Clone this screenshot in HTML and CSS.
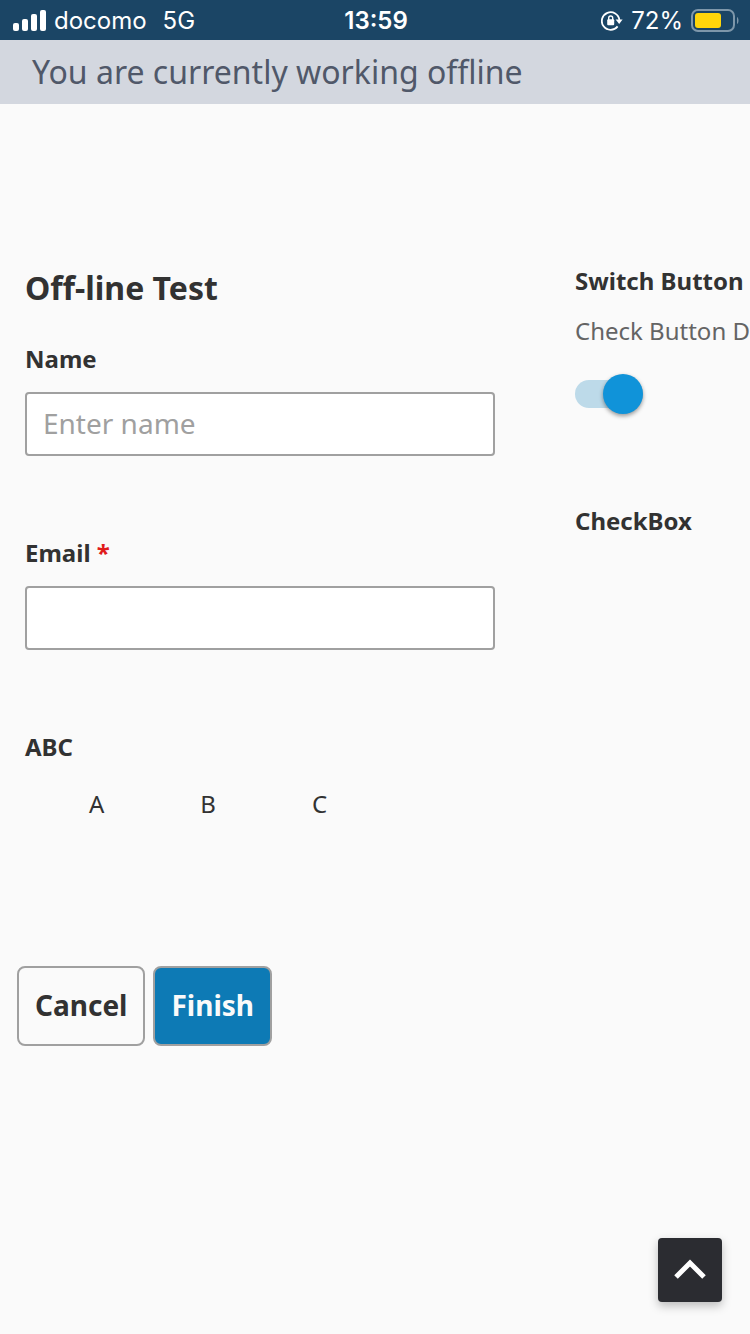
FILE: index.html
```html
<!DOCTYPE html>
<html lang="en">
<head>
    <meta charset="UTF-8">
    <meta name="viewport" content="width=device-width, initial-scale=1">
    <title>Off-line Test</title>
    <link rel="stylesheet" href="styles.css">
</head>
<body>
    <header class="status-bar">
        <div class="status-left">
            <svg width="33" height="22" viewBox="0 0 33 22" fill="#fff" aria-hidden="true">
                <rect x="0" y="13" width="6" height="8" rx="2"/>
                <rect x="9" y="9" width="6" height="12" rx="2"/>
                <rect x="18" y="4" width="6" height="17" rx="2"/>
                <rect x="27" y="0" width="6" height="21" rx="2"/>
            </svg>
            <span class="carrier">docomo</span>
            <span>5G</span>
        </div>
        <div class="status-time">13:59</div>
        <div class="status-right">
            <svg width="22" height="20" viewBox="0 0 22 20" fill="none" aria-hidden="true">
                <path d="M16.6 15.4A8.8 8.8 0 1 1 18.4 9" stroke="#fff" stroke-width="1.8"/>
                <path d="M14.6 8.5H21.6L18.2 13Z" fill="#fff"/>
                <rect x="6.2" y="8.3" width="7" height="6" rx="1" fill="#fff"/>
                <path d="M7.7 9V7a2 2 0 0 1 4 0v2" stroke="#fff" stroke-width="1.4"/>
            </svg>
            <span>72%</span>
            <svg width="48" height="24" viewBox="0 0 48 24" fill="none" aria-hidden="true">
                <rect x="1" y="1" width="42" height="21" rx="6" stroke="#7e97aa" stroke-width="2"/>
                <rect x="4" y="4" width="26" height="15" rx="3" fill="#ffd60a"/>
                <path d="M46 8c2 1 2 6 0 7z" fill="#7e97aa"/>
            </svg>
        </div>
    </header>
    <div class="offline-banner">You are currently working offline</div>

    <main>
        <form>
            <div class="columns">
                <div class="main-column">
                    <h1>Off-line Test</h1>
                    <div class="field">
                        <label class="field-label" for="name">Name</label>
                        <input class="text-input" type="text" id="name" placeholder="Enter name">
                    </div>
                    <div class="field">
                        <label class="field-label" for="email">Email <span class="required">*</span></label>
                        <input class="text-input" type="email" id="email" required>
                    </div>
                    <fieldset class="choices">
                        <legend class="field-label">ABC</legend>
                        <div class="choice-row">
                            <label class="choice"><input type="radio" name="abc" value="A">A</label>
                            <label class="choice"><input type="radio" name="abc" value="B">B</label>
                            <label class="choice"><input type="radio" name="abc" value="C">C</label>
                        </div>
                    </fieldset>
                </div>
                <div class="side-column">
                    <label class="field-label" for="switch">Switch Button</label>
                    <p class="description">Check Button D</p>
                    <input class="switch" type="checkbox" id="switch" checked>
                    <h2 class="field-label">CheckBox</h2>
                </div>
            </div>
            <div class="button-group">
                <button type="button" class="btn">Cancel</button>
                <button type="submit" class="btn btn-primary">Finish</button>
            </div>
        </form>
    </main>

    <button type="button" class="to-top" aria-label="Back to top">
        <svg width="32" height="22" viewBox="0 0 32 22" fill="none" aria-hidden="true">
            <path d="M2 18L16 4L30 18" stroke="#fff" stroke-width="5"/>
        </svg>
    </button>
</body>
</html>
```
FILE: styles.css
```css
* {
    box-sizing: border-box;
}
body {
    margin: 0;
    min-height: 100vh;
    overflow-x: hidden;
    background-color: #fafafa;
    color: #323232;
    font-family: "Noto Sans", sans-serif;
    font-size: 24px;
    line-height: 32px;
}
.status-bar {
    display: grid;
    grid-template-columns: 1fr auto 1fr;
    align-items: center;
    height: 40px;
    padding: 1px 11px 0 13px;
    background-color: #1b4565;
    color: #fff;
    font-family: Inter, sans-serif;
}
.status-left,
.status-right {
    display: flex;
    align-items: center;
    gap: 8px;
}
.status-right {
    justify-content: flex-end;
}
.carrier {
    margin-right: 8px;
}
.status-time {
    font-weight: 600;
}
.offline-banner {
    padding: 12px 32px;
    background-color: #d3d7df;
    color: #505869;
    font-size: 32px;
    line-height: 40px;
}
main {
    padding: 161px 0 80px;
}
.columns {
    display: grid;
    grid-template-columns: minmax(0, 1fr) 175px;
    gap: 80px;
    padding-left: 25px;
}
h1 {
    margin: 3px 0 35px;
    font-size: 32px;
    line-height: 40px;
}
.field {
    margin-bottom: 81px;
}
.field-label {
    display: block;
    margin: 0;
    padding: 0;
    font-size: 24px;
    font-weight: bold;
    white-space: nowrap;
}
.required {
    color: #e01b1b;
}
.text-input {
    display: block;
    width: 100%;
    height: 64px;
    margin-top: 17px;
    padding: 0 16px 2px;
    border: 2px solid #a0a0a0;
    border-radius: 4px;
    background-color: #fff;
    color: #323232;
    font: inherit;
    font-size: 28px;
}
.text-input::placeholder {
    color: #a0a0a0;
}
.choices {
    margin: 0;
    padding: 0;
    border: 0;
}
.choice-row {
    display: flex;
    gap: 32px;
    margin-top: 21px;
}
.choice {
    display: flex;
    align-items: center;
    height: 40px;
}
.choice input {
    width: 40px;
    height: 40px;
    margin: 0 24px 0 0;
    appearance: none;
}
.description {
    margin: 18px 0 33px;
    color: #646464;
    white-space: nowrap;
}
.switch {
    display: flex;
    align-items: center;
    justify-content: flex-end;
    width: 68px;
    height: 28px;
    margin: 0 0 97px;
    appearance: none;
    background-color: #bddae9;
    border-radius: 14px;
}
.switch::before {
    content: "";
    flex: none;
    width: 40px;
    height: 40px;
    border-radius: 50%;
    background-color: #1093d9;
    box-shadow: 0 2px 4px rgba(0, 0, 0, 0.4);
}
.switch:not(:checked) {
    justify-content: flex-start;
}
.button-group {
    display: flex;
    gap: 8px;
    margin-top: 142px;
    padding-left: 17px;
}
.btn {
    height: 80px;
    padding: 0 16px 2px;
    border: 2px solid #a0a0a0;
    border-radius: 8px;
    background-color: #fafafa;
    color: #323232;
    font: inherit;
    font-size: 28px;
    font-weight: bold;
    cursor: pointer;
}
.btn-primary {
    background-color: #0d7ab5;
    color: #fafafa;
}
.to-top {
    position: fixed;
    right: 28px;
    bottom: 32px;
    display: flex;
    align-items: center;
    justify-content: center;
    width: 64px;
    height: 64px;
    padding: 0;
    border: 0;
    border-radius: 4px;
    background-color: #2b2c31;
    box-shadow: 0 4px 10px rgba(0, 0, 0, 0.25);
    cursor: pointer;
}
```
